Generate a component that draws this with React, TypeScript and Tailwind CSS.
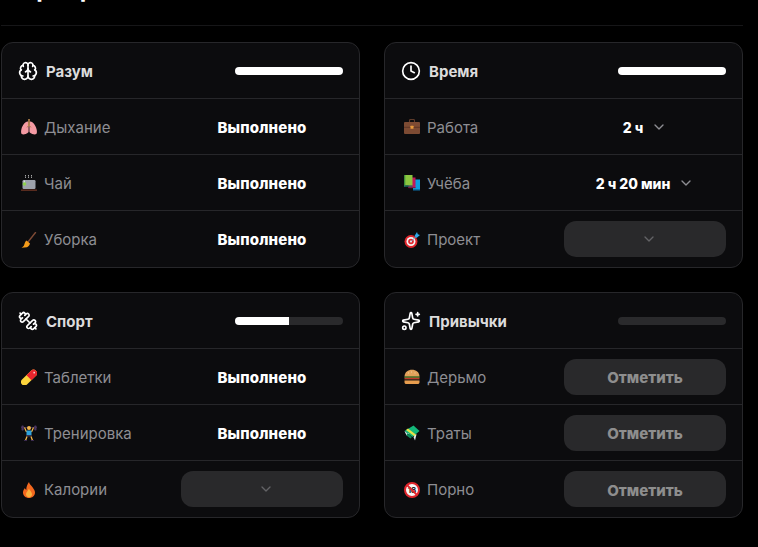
import { Brain, Clock, Dumbbell, Sparkles, ChevronDown } from "lucide-react";
import type { ReactNode } from "react";

type Row = { e: ReactNode; label: string; kind: "done" | "value" | "select" | "mark"; value?: string };

function Svg({ children }: { children: ReactNode }) {
  return (
    <svg viewBox="0 0 16 16" width="16" height="16" className="shrink-0">
      {children}
    </svg>
  );
}

const Lungs = () => (
  <Svg>
    <path d="M6.600 2.500C4 2.600 1.300 6.500.4 10.200c-.6 2.600-.4 4.800.9 5.100 1.800.4 4-.4 5.300-1.200.8-.5 1-1 1-2V4c0-1-.7-1.600-1-1.500z" fill="#f49aa3" />
    <path d="M9.400 2.500c2.600.1 5.300 4 6.200 7.700.6 2.600.4 4.800-.9 5.100-1.800.4-4-.4-5.300-1.200-.8-.5-1-1-1-2V4c0-1 .7-1.600 1-1.500z" fill="#f49aa3" />
    <rect x="7.200" y="0" width="1.600" height="7" fill="#b8864e" />
    <path d="M8 6 6 8.500M8 6l2 2.500" stroke="#b8864e" strokeWidth="1" fill="none" />
  </Svg>
);
const Tea = () => (
  <Svg>
    <path d="M4.500 0v3M7.500 0v3M10.500 0v3" stroke="#a8a8a8" strokeWidth="1" strokeDasharray="1.500 .6" />
    <rect x="1.500" y="5" width="13" height="9" rx="1.200" fill="#9ea3ad" />
    <rect x="2.800" y="5.500" width="1" height="3" fill="#e8e8e8" />
    <circle cx="3.500" cy="9" r="1.800" fill="#8fd14f" />
    <rect x="0" y="14.500" width="16" height="1.300" fill="#6b3324" />
  </Svg>
);
const Broom = () => (
  <Svg>
    <path d="M14.500.5 7 10" stroke="#7d4a35" strokeWidth="1.400" strokeLinecap="round" />
    <path d="M5.500 8.500 9 11.500c-.6 2-2 3.500-3 3.800L.5 15.800c1.600-.8 2.500-2 2.800-3.200.4-1.600 1-3.200 2.200-4.100z" fill="#f59c1a" />
  </Svg>
);
const Briefcase = () => (
  <Svg>
    <path d="M5.500 3V1.500c0-.6.4-1 1-1h3c.6 0 1 .4 1 1V3" fill="none" stroke="#5e3b2a" strokeWidth="1.100" />
    <rect x="0" y="3" width="16" height="12" rx="1" fill="#7d4b33" />
    <rect x="0" y="7.800" width="16" height="1" fill="#5e3626" />
    <rect x="6.500" y="6.800" width="3" height="3" rx=".4" fill="#e79a3c" />
  </Svg>
);
const Books = () => (
  <Svg>
    <rect x="9" y="4.500" width="7" height="10.500" fill="#0b9fe0" />
    <rect x="9" y="14" width="7" height="1.500" fill="#0a6fa8" />
    <rect x="4.500" y="2.500" width="7" height="10.500" fill="#c2185b" />
    <rect x="4.500" y="12" width="7" height="1.200" fill="#7b1c4a" />
    <rect x="0" y="0" width="8.500" height="10.500" fill="#8cc63f" />
    <rect x="0" y="0" width="1.300" height="11.500" fill="#3f8f3a" />
    <rect x="0" y="10.500" width="8.500" height="1.200" fill="#1c6e6a" />
  </Svg>
);
const Dart = () => (
  <Svg>
    <circle cx="7" cy="9.500" r="6.500" fill="#e0262c" />
    <circle cx="7" cy="9.500" r="4.500" fill="#f4f4f4" />
    <circle cx="7" cy="9.500" r="2.800" fill="#e0262c" />
    <circle cx="7" cy="9.500" r="1.100" fill="#f4f4f4" />
    <path d="M7 9.500 12 4.500" stroke="#6aa6c8" strokeWidth="1" />
    <path d="M10.500 4 13 0l.8 2.200L16 3l-3.500 3z" fill="#2fa8e8" />
  </Svg>
);
const Pill = () => (
  <Svg>
    <path d="M1 10.500 10 1.800a3.500 3.500 0 0 1 5 5l-9 8.700a3.500 3.500 0 0 1-5-5z" fill="#fcd43c" />
    <path d="M5.500 6.200 10 1.800a3.500 3.500 0 0 1 5 5l-4.500 4.400z" fill="#e8252e" />
    <rect x="12.400" y="2.800" width="1.600" height="1.600" fill="#f8d0d0" />
  </Svg>
);
const Lifter = () => (
  <Svg>
    <rect x="0" y="2" width="16" height="1" fill="#3a2a4e" />
    <rect x=".5" y=".5" width="2.200" height="5" rx=".8" fill="#4a3560" />
    <rect x="13.300" y=".5" width="2.200" height="5" rx=".8" fill="#4a3560" />
    <path d="M3.500 2.500 5.500 7M12.500 2.500 10.500 7" stroke="#f3b64a" strokeWidth="1.200" />
    <circle cx="8" cy="3" r="2" fill="#f3b64a" />
    <rect x="5.500" y="5.500" width="5" height="5" fill="#2ea3dc" />
    <rect x="5.500" y="10" width="5" height="1.500" fill="#3d3550" />
    <path d="M6 11.500 4.500 15.500M10 11.500l1.500 4" stroke="#f3b64a" strokeWidth="1.300" />
    <path d="M3 15.500h3M10 15.500h3" stroke="#3a2a4e" strokeWidth="1" />
  </Svg>
);
const Fire = () => (
  <Svg>
    <path d="M8 0c.5 2.600 2.600 3.700 3.900 5.700 1 1.500 2.100 3 2.100 4.800 0 3.300-2.900 5.500-6 5.500S2 13.800 2 10.500c0-1.700 1-3.200 1.900-4.400.3 1 .8 1.500 1.400 1.800C5.200 5 6.400 2.300 8 0z" fill="#f4691f" />
    <path d="M8 6.500c.3 1.500 1.500 2.300 2.200 3.400.5.800.8 1.500.8 2.400C11 14 9.700 15.200 8 15.200S5 14 5 12.300c0-2 2.200-3.500 3-5.800z" fill="#fbb13c" />
  </Svg>
);
const Burger = () => (
  <Svg>
    <path d="M.5 7.500C.8 3 4 .8 8 .8s7.200 2.200 7.500 6.700z" fill="#e2a25a" />
    <path d="M4 4h1M7 3h1M10.500 4h1" stroke="#f6dca8" strokeWidth=".8" />
    <rect x=".3" y="7.500" width="15.400" height="1.300" rx=".6" fill="#5e9e34" />
    <rect x=".5" y="8.800" width="15" height="1.400" fill="#c0392b" />
    <rect x=".5" y="10" width="15" height="1.400" fill="#4d2c1c" />
    <path d="M.5 11.500h15V13.200c0 1-.8 1.800-1.800 1.800H2.300C1.300 15 .5 14.200 .5 13.200z" fill="#e79d4e" />
  </Svg>
);
const Money = () => (
  <Svg>
    <path d="M.5 6 9.500.5l6 5.500-7 6z" fill="#14b87a" />
    <path d="M2 5 4 3.500 12.500 10l-1.800 1.500z" fill="#e6e24a" />
    <path d="M5 8.500 3 8l-2.500-2 2 4.500z" fill="#ddeef0" />
    <path d="M9.500 12 11 15.500l1.500-6.500z" fill="#e8f2f5" />
    <path d="M3 8l5 4-1.500 1.500-4-3z" fill="#0d8a5a" />
  </Svg>
);
const No18 = () => (
  <Svg>
    <circle cx="8" cy="8" r="7" fill="#f8f8f8" stroke="#e0262c" strokeWidth="2" />
    <text x="8" y="11" textAnchor="middle" fontSize="8" fontWeight="700" fill="#222" fontFamily="Inter, sans-serif">18</text>
    <path d="M3 3 13 13" stroke="#e0262c" strokeWidth="1.800" />
  </Svg>
);

function RowItem({ r }: { r: Row }) {
  return (
    <div className="flex h-[56px] items-center justify-between border-t border-[#27272a] pl-[19px] pr-4 last:h-[57px]">
      <div className="flex items-center gap-[7px] pt-px text-[15px] text-[#8e8e93]">
        {r.e}
        <span className="pt-[2px]">{r.label}</span>
      </div>
      <div className="flex w-[162px] items-center justify-center">
        {r.kind === "done" && <span className="pt-[3px] text-[15px] font-extrabold tracking-[0.01em] text-white">Выполнено</span>}
        {r.kind === "value" && (
          <span className="flex items-center gap-2 text-[14px] font-extrabold text-white">
            <span className="pt-[2px]">{r.value}</span>
            <ChevronDown size={16} className="text-[#8e8e93]" />
          </span>
        )}
        {r.kind === "select" && (
          <div className="flex h-[36px] w-full items-center justify-center gap-2 rounded-[12px] bg-[#29292b]">
            <span />
            <ChevronDown size={16} className="text-[#636366]" />
          </div>
        )}
        {r.kind === "mark" && (
          <div className="flex h-[36px] w-full items-center justify-center rounded-[12px] bg-[#29292b] pt-[4px] text-[15px] font-extrabold text-[#8e8e8e]">
            Отметить
          </div>
        )}
      </div>
    </div>
  );
}

function Card({ icon, title, pct, rows }: { icon: ReactNode; title: string; pct: number; rows: Row[] }) {
  return (
    <div className="overflow-hidden rounded-[12px] border border-[#27272a] bg-[#0c0c0e]">
      <div className="flex h-[55px] items-center justify-between px-4">
        <div className="flex items-center gap-2 text-[15px] font-bold text-[#dcdcdc]">
          {icon}
          <span className="pt-[3px]">{title}</span>
        </div>
        <div className="h-2 w-[108px] overflow-hidden rounded-full bg-[#2a2a2c]">
          <div className="h-full bg-white" style={{ width: `${pct}%` }} />
        </div>
      </div>
      {rows.map((r) => (
        <RowItem key={r.label} r={r} />
      ))}
    </div>
  );
}

export default function App() {
  return (
    <div className="h-[547px] w-[758px] overflow-hidden bg-black pl-px pr-[15px] font-['Inter',sans-serif]">
      <div className="flex h-[26px] items-start border-b border-[#161618]">
        <div className="-mt-[23px] pl-[4px] text-[24px] leading-6 font-bold text-white">Карьера</div>
      </div>
      <div className="mt-4 grid grid-cols-2 gap-6">
        <Card
          icon={<Brain size={20} className="text-white" />}
          title="Разум"
          pct={100}
          rows={[
            { e: <Lungs />, label: "Дыхание", kind: "done" },
            { e: <Tea />, label: "Чай", kind: "done" },
            { e: <Broom />, label: "Уборка", kind: "done" },
          ]}
        />
        <Card
          icon={<Clock size={20} className="text-white" />}
          title="Время"
          pct={100}
          rows={[
            { e: <Briefcase />, label: "Работа", kind: "value", value: "2 ч" },
            { e: <Books />, label: "Учёба", kind: "value", value: "2 ч 20 мин" },
            { e: <Dart />, label: "Проект", kind: "select" },
          ]}
        />
        <Card
          icon={<Dumbbell size={20} className="-scale-x-100 text-white" />}
          title="Спорт"
          pct={50}
          rows={[
            { e: <Pill />, label: "Таблетки", kind: "done" },
            { e: <Lifter />, label: "Тренировка", kind: "done" },
            { e: <Fire />, label: "Калории", kind: "select" },
          ]}
        />
        <Card
          icon={<Sparkles size={20} className="text-white" />}
          title="Привычки"
          pct={0}
          rows={[
            { e: <Burger />, label: "Дерьмо", kind: "mark" },
            { e: <Money />, label: "Траты", kind: "mark" },
            { e: <No18 />, label: "Порно", kind: "mark" },
          ]}
        />
      </div>
    </div>
  );
}
